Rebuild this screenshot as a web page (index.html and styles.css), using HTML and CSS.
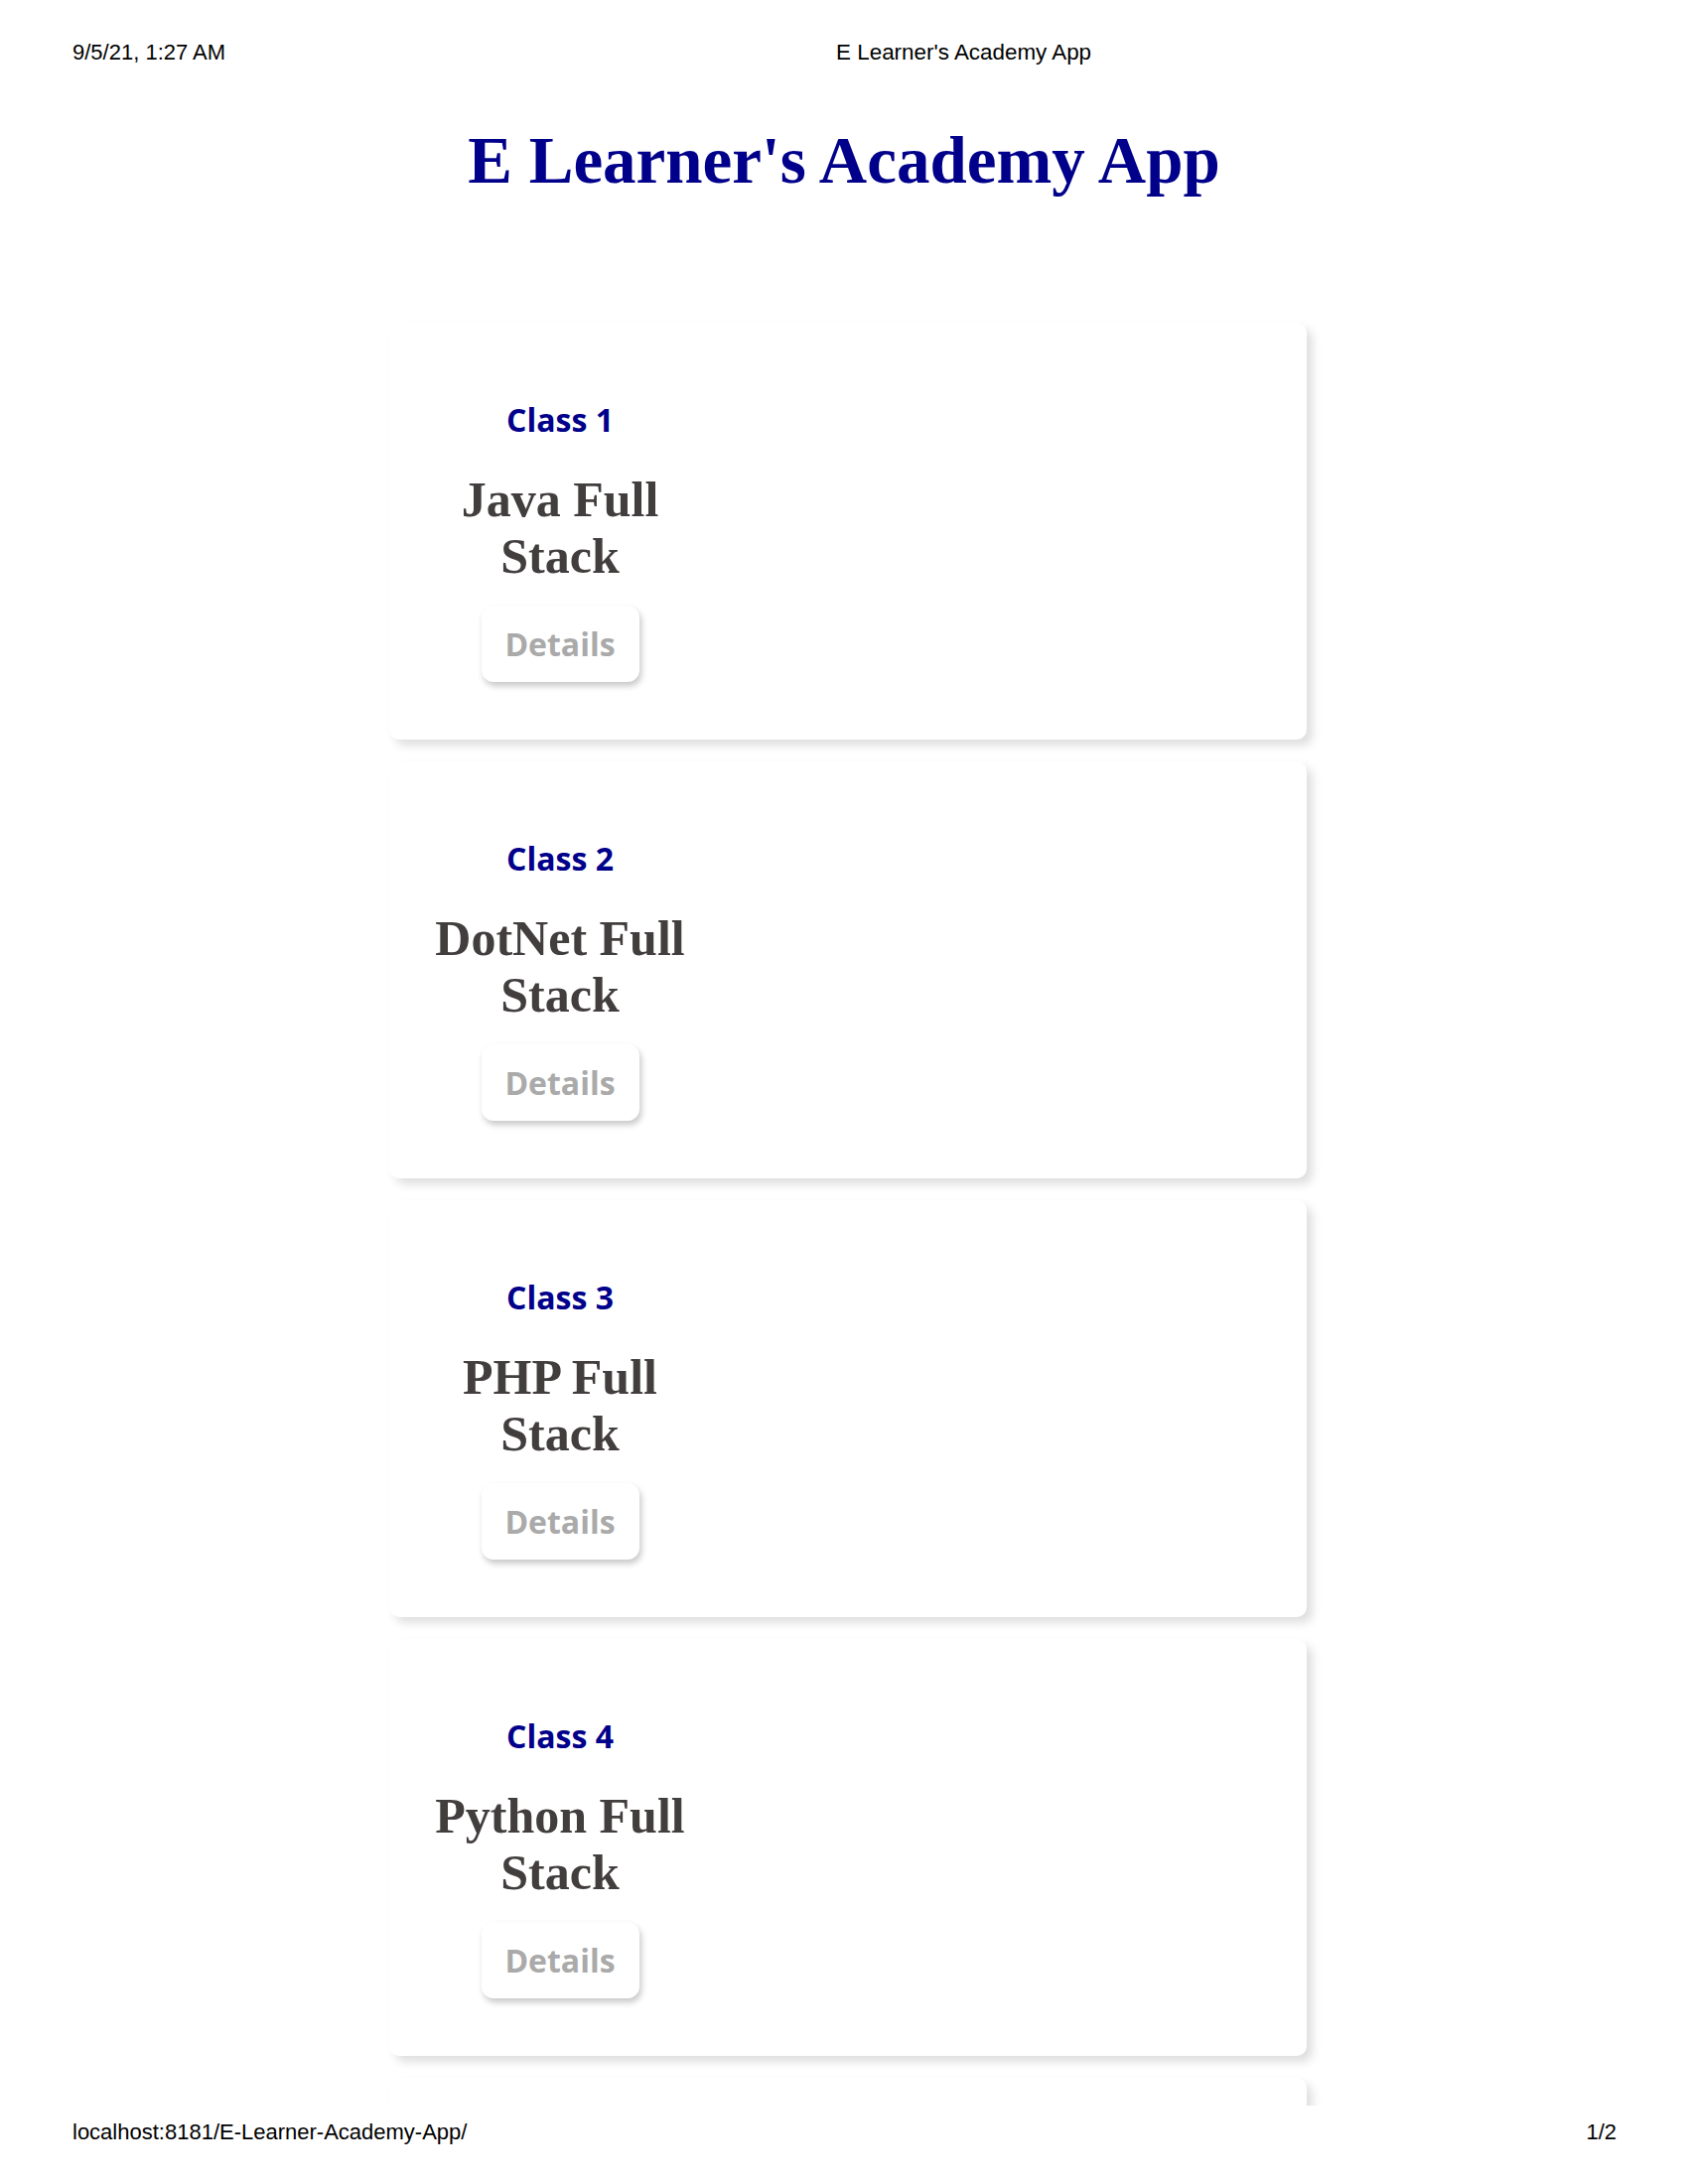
FILE: index.html
```html
<!DOCTYPE html>
<html lang="en">
<head>
<meta charset="utf-8">
<title>E Learner's Academy App</title>
<link rel="stylesheet" href="styles.css">
</head>
<body>
<div class="sheet">
  <div class="print-head">
    <span class="print-date">9/5/21, 1:27 AM</span>
    <span class="print-title">E Learner's Academy App</span>
  </div>
  <h1 class="app-title">E Learner's Academy App</h1>
  <div class="card-list">
    <div class="card">
      <div class="card-col">
        <h3 class="class-name">Class 1</h3>
        <h2 class="course">Java Full Stack</h2>
        <button class="details-btn">Details</button>
      </div>
    </div>
    <div class="card">
      <div class="card-col">
        <h3 class="class-name">Class 2</h3>
        <h2 class="course">DotNet Full Stack</h2>
        <button class="details-btn">Details</button>
      </div>
    </div>
    <div class="card">
      <div class="card-col">
        <h3 class="class-name">Class 3</h3>
        <h2 class="course">PHP Full Stack</h2>
        <button class="details-btn">Details</button>
      </div>
    </div>
    <div class="card">
      <div class="card-col">
        <h3 class="class-name">Class 4</h3>
        <h2 class="course">Python Full Stack</h2>
        <button class="details-btn">Details</button>
      </div>
    </div>
    <div class="card"></div>
  </div>
</div>
<div class="print-foot">
  <span>localhost:8181/E-Learner-Academy-App/</span>
  <span>1/2</span>
</div>
</body>
</html>
```
FILE: styles.css
```css
html, body {
  margin: 0;
  padding: 0;
  background: #ffffff;
}

.sheet {
  height: 2121px;
  overflow: hidden;
}

.print-head {
  display: flex;
  padding: 40px 72px 0 73px;
  font-family: "Liberation Sans", Arial, sans-serif;
  font-size: 22px;
  line-height: 26px;
  color: #000;
}

.print-title {
  margin-left: 615px;
  font-size: 22.4px;
}

.app-title {
  margin: 57px 0 0 0;
  text-align: center;
  font-family: "Liberation Serif", "Times New Roman", serif;
  font-weight: bold;
  font-size: 67px;
  line-height: 76px;
  color: #00008b;
}

.card-list {
  display: flex;
  flex-direction: column;
  gap: 22px;
  width: 924px;
  margin: 126px 0 0 392px;
}

.card {
  flex: none;
  height: 420px;
  box-sizing: border-box;
  padding: 78px 0 0 22px;
  background: #fff;
  border-radius: 10px;
  box-shadow: 6px 6px 10px rgba(0, 0, 0, 0.13);
}

.card-col {
  width: 300px;
  display: flex;
  flex-direction: column;
  align-items: center;
  text-align: center;
}

.class-name {
  margin: 0;
  font-family: "Open Sans", "Noto Sans", sans-serif;
  font-weight: 700;
  font-size: 32px;
  line-height: 40px;
  color: #00008b;
}

.course {
  margin: 32px 0 0 0;
  font-family: "Liberation Serif", "Times New Roman", serif;
  font-weight: bold;
  font-size: 50px;
  line-height: 57px;
  color: #433e3e;
}

.details-btn {
  margin-top: 21px;
  width: 159px;
  height: 77px;
  border: none;
  border-radius: 12px;
  background: #fff;
  box-shadow: 2px 4px 6px rgba(0, 0, 0, 0.22);
  font-family: "Open Sans", "Noto Sans", sans-serif;
  font-weight: 700;
  font-size: 32px;
  color: #aaaaaa;
  padding: 0;
}

.print-foot {
  display: flex;
  justify-content: space-between;
  padding: 14px 72px 0 73px;
  font-family: "Liberation Sans", Arial, sans-serif;
  font-size: 22px;
  line-height: 26px;
  color: #000;
}
```
